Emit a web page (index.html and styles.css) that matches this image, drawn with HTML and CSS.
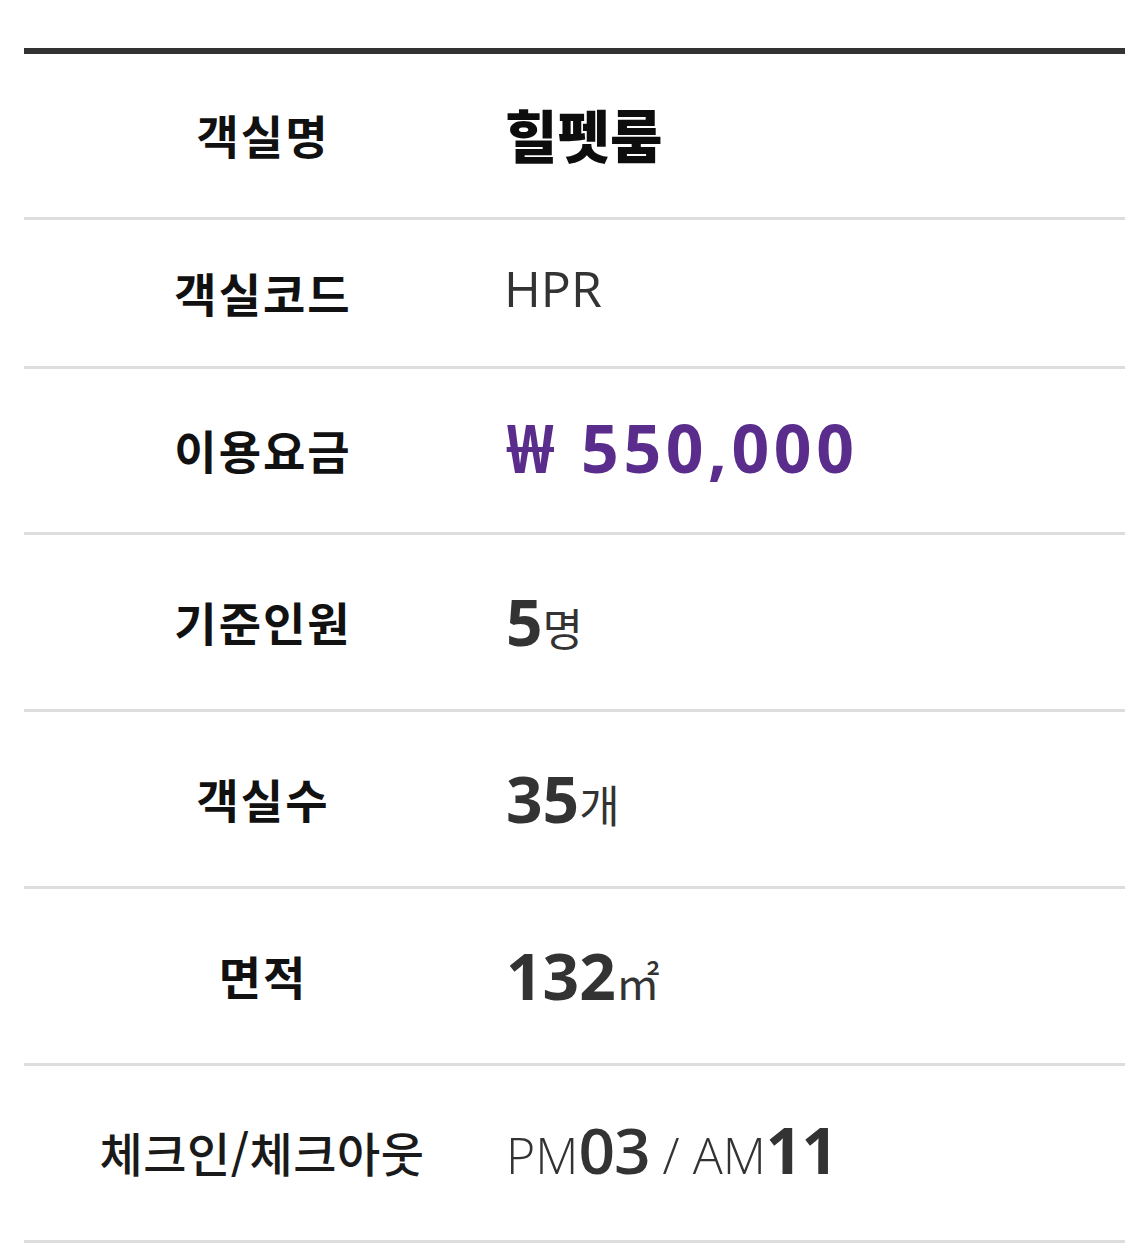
FILE: index.html
```html
<!DOCTYPE html>
<html lang="ko">
<head>
<meta charset="utf-8">
<link rel="stylesheet" href="styles.css">
</head>
<body>
<div class="info">
  <div class="row row-name">
    <div class="label">객실명</div>
    <div class="value name">힐펫룸</div>
  </div>
  <div class="row row-code">
    <div class="label">객실코드</div>
    <div class="value code">HPR</div>
  </div>
  <div class="row row-price">
    <div class="label">이용요금</div>
    <div class="value price">₩ 550,000</div>
  </div>
  <div class="row row-tall">
    <div class="label">기준인원</div>
    <div class="value"><span class="num">5</span><span class="unit">명</span></div>
  </div>
  <div class="row row-tall">
    <div class="label">객실수</div>
    <div class="value"><span class="num">35</span><span class="unit">개</span></div>
  </div>
  <div class="row row-tall">
    <div class="label">면적</div>
    <div class="value"><span class="num">132</span><span class="unit sq">㎡</span></div>
  </div>
  <div class="row row-tall">
    <div class="label label-light">체크인/체크아웃</div>
    <div class="value time"><span class="ampm">PM</span><span class="num mid">03</span><span class="ampm sep"> / AM</span><span class="num">11</span></div>
  </div>
</div>
</body>
</html>
```

FILE: styles.css
```css
html, body {
  margin: 0;
  padding: 0;
  background: #ffffff;
}
body {
  padding: 48px 0 0 24px;
  font-family: "Noto Sans CJK KR", "Noto Sans", sans-serif;
  color: #333333;
}
.info {
  border-top: 6px solid #333333;
}
.row {
  display: grid;
  grid-template-columns: 476px 1fr;
  align-items: center;
  border-bottom: 3px solid #dddddd;
  height: 163px;
}
.row-code { height: 146px; }
.row-price { height: 163px; }
.row-tall { height: 174px; }
.label {
  text-align: center;
  font-size: 46px;
  font-weight: 700;
  color: #111111;
  line-height: 1;
  letter-spacing: 2px;
  padding-left: 2px;
  padding-bottom: 3px;
}
.label-light {
  font-weight: 500;
  color: #1a1a1a;
  font-size: 47px;
  letter-spacing: 0.5px;
  padding-left: 0;
}
.value {
  padding-left: 6px;
  line-height: 1;
  white-space: nowrap;
}
.name {
  font-size: 57px;
  font-weight: 900;
  color: #0d0d0d;
  padding-left: 5px;
  padding-bottom: 4px;
}
.code {
  font-family: "Open Sans", "Noto Sans", sans-serif;
  font-size: 50px;
  font-weight: 400;
  color: #333333;
  padding-left: 4px;
  padding-bottom: 10px;
}
.price {
  font-family: "Open Sans", "Noto Sans", sans-serif;
  font-size: 66px;
  font-weight: 700;
  color: #5a2d8c;
  letter-spacing: 4.6px;
  padding-bottom: 8px;
}
.num {
  font-family: "Open Sans", "Noto Sans", sans-serif;
  font-size: 64px;
  font-weight: 700;
  color: #333333;
}
.unit {
  font-family: "Noto Sans CJK KR", sans-serif;
  font-size: 44px;
  font-weight: 400;
  color: #333333;
}
.ampm {
  font-family: "Open Sans", "Noto Sans", sans-serif;
  font-size: 50px;
  font-weight: 300;
  color: #333333;
}
.num.mid {
  font-weight: 600;
}
.time {
  padding-bottom: 6px;
}
.time .num {
  letter-spacing: -1px;
}
```
